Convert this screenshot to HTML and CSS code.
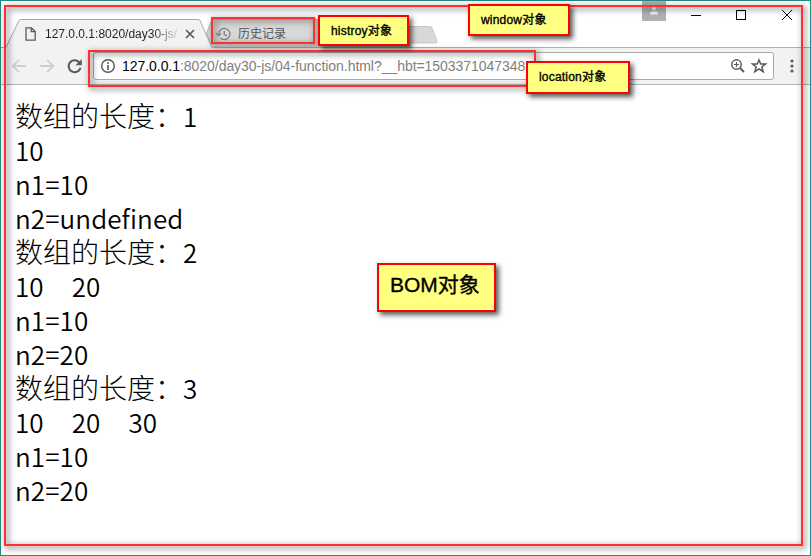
FILE: index.html
```html
<!DOCTYPE html>
<html lang="zh-CN">
<head>
<meta charset="utf-8">
<title>BOM对象</title>
<link rel="stylesheet" href="styles.css">
</head>
<body>
<div class="window">
  <header class="tabstrip">
    <svg class="tab-shapes" width="809" height="47" viewBox="1 1 809 47">
      <path d="M206.500 33.500L212 19.500H398L411 47.500H212Z" fill="#d8d8d8" stroke="#b4b4b4"/>
      <path d="M409 26.500H430Q431.500 26.500 432 28L437 41Q437.500 43 436 43H409Z" fill="#d8d8d8" stroke="#c8c8c8"/>
      <path d="M0 47.500H811" stroke="#b0b0b0"/>
      <path d="M0 47.500H6L19 20.500Q19.500 19.500 21 19.500H198Q199.500 19.500 200 20.500L212 47.500V49H6V47.500Z" fill="#f2f2f2"/>
      <path d="M0 47.500H6L19 20.500Q19.500 19.500 21 19.500H198Q199.500 19.500 200 20.500L212 47.500" fill="none" stroke="#a8a8a8"/>
    </svg>
    <div class="tab active">
      <svg width="12" height="14" viewBox="0 0 12 14"><path d="M1 .8H6.500L10.200 4.500V13.200H1ZM6.300 .8V4.700H10.200" fill="none" stroke="#5a5a5a" stroke-width="1.300"/></svg>
      <span class="tab-title">127.0.0.1:8020/day30-js/</span>
      <svg class="close" width="10" height="10" viewBox="0 0 10 10"><path d="M1 1L9 9M9 1L1 9" stroke="#5a5a5a" stroke-width="1.700"/></svg>
    </div>
    <div class="tab history">
      <svg width="15" height="14" viewBox="0 0 15 14"><path d="M2.700 7A5.600 5.600 0 1 1 4.500 11.100M.3 6.400L2.700 8.800L5 6.400M8.200 3.700V7.300L10.900 8.900" fill="none" stroke="#808080" stroke-width="1.300"/></svg>
      <span>历史记录</span>
    </div>
    <div class="profile"><svg width="10" height="9" viewBox="0 0 10 9"><circle cx="5" cy="2.200" r="2" fill="#eee"/><path d="M1 8.500V7Q1.500 5.200 5 5.200T9 7V8.500Z" fill="#eee"/></svg></div>
    <svg class="controls" width="104" height="12" viewBox="0 0 104 12" shape-rendering="crispEdges"><path d="M0 6.500H10" stroke="#000"/><rect x="45.500" y="1.500" width="9" height="9" fill="none" stroke="#000"/><path d="M91 1L101 11M101 1L91 11" stroke="#000" shape-rendering="auto"/></svg>
  </header>
  <div class="toolbar">
    <svg class="nav" width="76" height="20" viewBox="0 0 76 20" fill="none"><path d="M14 10H1M7 3.800L.8 10L7 16.200M28 10H41M35 3.800L41.200 10L35 16.200" stroke="#cfcfcf" stroke-width="1.800"/><path d="M67 6A6 6 0 1 0 68.500 11.700" stroke="#5a5a5a" stroke-width="2.100"/><path d="M69.800 3V9.200H63.500Z" fill="#5a5a5a"/></svg>
    <div class="address">
      <svg width="16" height="16" viewBox="0 0 16 16"><circle cx="8" cy="8" r="6.300" fill="none" stroke="#555" stroke-width="1.400"/><path d="M8 7V12M8 4.200V5.900" stroke="#555" stroke-width="1.600"/></svg>
      <span class="url"><b>127.0.0.1</b>:8020/day30-js/04-function.html?__hbt=1503371047348</span>
      <svg class="actions" width="38" height="16" viewBox="0 0 38 16" fill="none" stroke="#5a5a5a"><circle cx="6.500" cy="6.500" r="4.700" stroke-width="1.500"/><path d="M10 10L14 14" stroke-width="2"/><path d="M4 6.500H9M6.500 4V9" stroke-width="1.100"/><path d="M29 2L30.700 6H35.500L31.800 9L33.200 13.700L29 10.900L24.800 13.700L26.200 9L22.500 6H27.300Z" stroke-width="1.500"/></svg>
    </div>
    <svg class="dots" width="4" height="14" viewBox="0 0 4 14" fill="#5a5a5a"><circle cx="2" cy="2" r="1.600"/><circle cx="2" cy="7" r="1.600"/><circle cx="2" cy="12" r="1.600"/></svg>
  </div>
  <main class="page">
    <p>数组的长度：<span>1</span></p>
    <p><span>10</span></p>
    <p><span>n1=10</span></p>
    <p><span>n2=undefined</span></p>
    <p>数组的长度：<span>2</span></p>
    <p class="values"><span>10</span><span>20</span></p>
    <p><span>n1=10</span></p>
    <p><span>n2=20</span></p>
    <p>数组的长度：<span>3</span></p>
    <p class="values"><span>10</span><span>20</span><span>30</span></p>
    <p><span>n1=10</span></p>
    <p><span>n2=20</span></p>
  </main>
</div>
<div class="frame frame-window"></div>
<div class="frame frame-history"></div>
<div class="frame frame-location"></div>
<div class="note note-window">window对象</div>
<div class="note note-history">histroy对象</div>
<div class="note note-location">location对象</div>
<div class="note note-bom">BOM对象</div>
</body>
</html>
```
FILE: styles.css
```css
* { box-sizing: border-box; }
body { margin: 0; font-family: "Liberation Sans", "Noto Sans CJK SC", sans-serif; color: #000; }
svg { display: block; flex: none; }
.window { width: 811px; height: 556px; border: 1px solid #208b80; background: #fff; overflow: hidden; }
.tabstrip { height: 47px; position: relative; display: flex; align-items: flex-start; }
.tab-shapes { position: absolute; left: 0; top: 0; }
.tab { position: relative; display: flex; align-items: center; height: 28px; margin-top: 19px; font-size: 12px; white-space: nowrap; }
.active { width: 197px; padding-left: 24px; }
.tab-title { flex: none; width: 137px; margin-left: 8px; color: #333; background: linear-gradient(90deg, #222 108px, #f2f2f2 136px); background-clip: text; -webkit-text-fill-color: transparent; }
.close { margin-left: 3px; }
.history { width: 194px; padding-left: 18px; color: #555; }
.history span { margin-left: 7px; line-height: 18px; }
.profile { position: relative; width: 24px; height: 20px; margin-left: 250px; background: #b0b0b0; display: flex; justify-content: center; padding-top: 5px; }
.controls { position: relative; margin: 8px 0 0 25px; }
.toolbar { height: 37px; background: #f2f2f2; border-bottom: 1px solid #b4b4b4; display: flex; align-items: center; padding-left: 11px; }
.address { width: 681px; height: 28px; margin-left: 5px; border: 1px solid #aaa; border-radius: 3px; background: #fff; display: flex; align-items: center; padding: 0 7px 0 6px; }
.url { margin-left: 6px; font-size: 14px; letter-spacing: -.045px; color: #808080; white-space: nowrap; }
.url b { font-weight: 400; color: #000; }
.actions { margin-left: auto; margin-right: -2px; }
.dots { margin-left: 16px; }
.page { padding: 14px 0 0 14px; font-family: "Noto Sans CJK SC", sans-serif; font-weight: 300; font-size: 28px; }
.page p { margin: 0; height: 34px; line-height: 33px; white-space: nowrap; }
.page span { font-size: 26px; font-weight: 350; letter-spacing: .1px; }
.values { display: flex; gap: 28px; }
.frame { position: absolute; border: 2px solid #ff3030; filter: drop-shadow(2px 2px 3px rgba(0,0,0,.75)); }
.frame-window { left: 4px; top: 5px; width: 799px; height: 541px; }
.frame-history { left: 211px; top: 17px; width: 104px; height: 27px; }
.frame-location { left: 88px; top: 50px; width: 448px; height: 37px; }
.note { position: absolute; border: 2px solid #f00; background: #ffff80; box-shadow: 3px 3px 5px rgba(0,0,0,.65); font-size: 12px; line-height: 18px; font-weight: 400; letter-spacing: .2px; -webkit-text-stroke: .35px #000; white-space: nowrap; }
.note-window { left: 468px; top: 4px; width: 102px; height: 32px; padding: 5px 11px; }
.note-history { left: 318px; top: 15px; width: 91px; height: 31px; padding: 5px 11px; }
.note-location { left: 526px; top: 61px; width: 104px; height: 33px; padding: 5px 11px; }
.note-bom { left: 377px; top: 263px; width: 119px; height: 49px; padding: 4px 11px; font-size: 21px; line-height: 31px; letter-spacing: 0; }
```
